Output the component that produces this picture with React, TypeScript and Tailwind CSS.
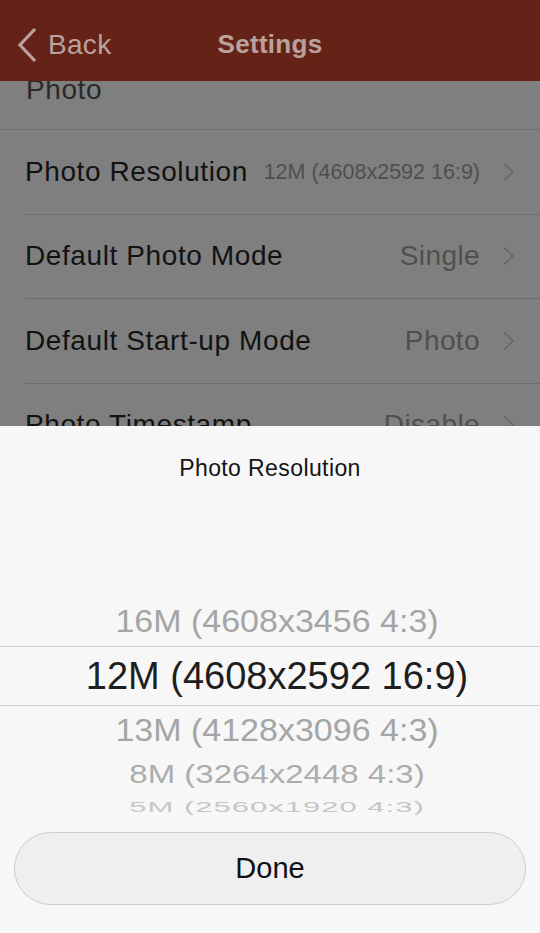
const rows = [
  { label: 'Photo Resolution', value: '12M (4608x2592 16:9)', small: true },
  { label: 'Default Photo Mode', value: 'Single' },
  { label: 'Default Start-up Mode', value: 'Photo' },
  { label: 'Photo Timestamp', value: 'Disable' },
];

function Chevron({ className }: { className?: string }) {
  return (
    <svg width="13" height="20" viewBox="0 0 13 20" className={className}>
      <polyline points="2,1.5 11,10 2,18.5" fill="none" stroke="currentColor" strokeWidth="1.6" />
    </svg>
  );
}

export default function App() {
  return (
    <div
      className="w-[540px] h-[933px] flex flex-col overflow-hidden bg-[#7f7f7f]"
      style={{ fontFamily: '"Liberation Sans", Arial, sans-serif' }}
    >
      {/* header */}
      <div className="h-[81px] shrink-0 bg-[#652318] flex items-center pt-[8px] relative z-10 text-[#b9a29e]">
        <div className="flex items-center pl-[16px] gap-[10px]">
          <svg width="22" height="36" viewBox="0 0 22 36">
            <polyline points="19,2 4,18 19,34" fill="none" stroke="currentColor" strokeWidth="3.2" />
          </svg>
          <span className="text-[28px] tracking-[0.3px]">Back</span>
        </div>
        <div className="absolute inset-0 pt-[8px] flex items-center justify-center">
          <span className="text-[26px] font-bold tracking-[0.3px]">Settings</span>
        </div>
      </div>

      {/* list behind the sheet */}
      <div className="h-[345px] shrink-0 overflow-hidden">
        <div className="-mt-[17px]">
          <div className="h-[66px] pt-[10px] pl-[26px] border-b border-[#6c6c6c] text-[28px] leading-[31px] tracking-[0.6px] text-[#2a2a2a]">
            Photo
          </div>
          {rows.map((r) => (
            <div key={r.label} className="pl-[25px]">
              <div className="h-[84.5px] flex items-center border-b border-[#6c6c6c] pr-[60px] relative">
                <span className="text-[28px] tracking-[0.6px] text-[#121212]">{r.label}</span>
                <span
                  className={`ml-auto text-[#4f4f4f] ${r.small ? 'text-[21.5px]' : 'text-[28px] tracking-[0.4px]'}`}
                >
                  {r.value}
                </span>
                <Chevron className="absolute right-[25px] text-[#686868]" />
              </div>
            </div>
          ))}
        </div>
      </div>

      {/* picker sheet */}
      <div className="flex-1 bg-[#f7f7f7] flex flex-col">
        <div className="pt-[30px] text-center text-[23px] leading-[25px] text-[#141414] tracking-[0.4px]">
          Photo Resolution
        </div>
        <div className="mt-[115px] flex flex-col pl-[14px]">
          <div className="h-[50px] flex items-center justify-center text-[34px] text-[#a5a5a5] scale-y-[0.93]">
            16M (4608x3456 4:3)
          </div>
          <div className="h-[60px] -ml-[14px] pl-[14px] flex items-center justify-center border-y border-[#d2d2d2] text-[38px] text-[#1e1e1e]">
            12M (4608x2592 16:9)
          </div>
          <div className="h-[48px] flex items-center justify-center text-[34px] text-[#a5a5a5] scale-y-[0.93]">
            13M (4128x3096 4:3)
          </div>
          <div className="h-[40px] flex items-center justify-center text-[33px] text-[#adadad] scale-y-[0.78]">
            8M (3264x2448 4:3)
          </div>
          <div className="h-[26px] flex items-center justify-center text-[31px] text-[#c6c6c6] scale-y-[0.5] tracking-[1px]">
            5M (2560x1920 4:3)
          </div>
        </div>
        <div className="mt-[12px] mx-[14px] h-[73px] rounded-full border border-[#cdcdcd] bg-[#efefef] flex items-center justify-center">
          <span className="text-[29px] text-[#111111]">Done</span>
        </div>
      </div>
    </div>
  );
}
